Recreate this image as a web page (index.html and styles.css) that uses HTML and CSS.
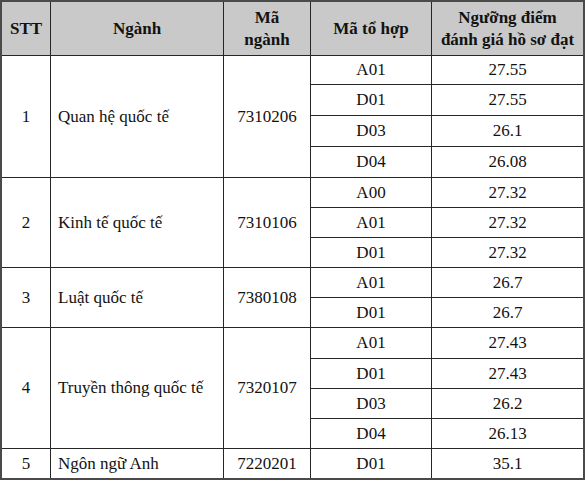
FILE: index.html
```html
<!DOCTYPE html>
<html lang="vi">
<head>
<meta charset="utf-8">
<title>Ngưỡng điểm đánh giá hồ sơ</title>
<link rel="stylesheet" href="styles.css">
</head>
<body>
<div class="score-grid">
  <div class="cell head">STT</div>
  <div class="cell head">Ngành</div>
  <div class="cell head">Mã<br>ngành</div>
  <div class="cell head">Mã tổ hợp</div>
  <div class="cell head">Ngưỡng điểm<br>đánh giá hồ sơ đạt</div>

  <div class="cell span4">1</div>
  <div class="cell span4 name">Quan hệ quốc tế</div>
  <div class="cell span4">7310206</div>
  <div class="cell">A01</div><div class="cell">27.55</div>
  <div class="cell">D01</div><div class="cell">27.55</div>
  <div class="cell">D03</div><div class="cell">26.1</div>
  <div class="cell">D04</div><div class="cell">26.08</div>

  <div class="cell span3">2</div>
  <div class="cell span3 name">Kinh tế quốc tế</div>
  <div class="cell span3">7310106</div>
  <div class="cell">A00</div><div class="cell">27.32</div>
  <div class="cell">A01</div><div class="cell">27.32</div>
  <div class="cell">D01</div><div class="cell">27.32</div>

  <div class="cell span2">3</div>
  <div class="cell span2 name">Luật quốc tế</div>
  <div class="cell span2">7380108</div>
  <div class="cell">A01</div><div class="cell">26.7</div>
  <div class="cell">D01</div><div class="cell">26.7</div>

  <div class="cell span4">4</div>
  <div class="cell span4 name">Truyền thông quốc tế</div>
  <div class="cell span4">7320107</div>
  <div class="cell">A01</div><div class="cell">27.43</div>
  <div class="cell">D01</div><div class="cell">27.43</div>
  <div class="cell">D03</div><div class="cell">26.2</div>
  <div class="cell">D04</div><div class="cell">26.13</div>

  <div class="cell">5</div>
  <div class="cell name">Ngôn ngữ Anh</div>
  <div class="cell">7220201</div>
  <div class="cell">D01</div><div class="cell">35.1</div>
</div>
</body>
</html>
```

FILE: styles.css
```css
html, body {
  margin: 0;
  padding: 0;
  background: #ffffff;
}

.score-grid {
  display: grid;
  width: 585px;
  box-sizing: border-box;
  grid-template-columns: 48px 172px 86px 120px 151px;
  grid-template-rows: 53px 28px 30px 30px 30px 29px 29px 29px 29px 29px 30px 29px 29px 29px 29px;
  gap: 1px;
  background: #262626;
  border: 2px solid #4a4a4a;
  font-family: "Liberation Serif", "Times New Roman", serif;
  font-size: 17px;
  color: #121212;
}

.cell {
  background: #ffffff;
  display: flex;
  align-items: center;
  justify-content: center;
  text-align: center;
  line-height: 20px;
  white-space: nowrap;
}

.cell.head {
  background: #c9c9c9;
  font-weight: bold;
  line-height: 22px;
}

.cell.name {
  justify-content: flex-start;
  text-align: left;
  padding-left: 7px;
}

.span2 { grid-row: span 2; }
.span3 { grid-row: span 3; }
.span4 { grid-row: span 4; }
```
